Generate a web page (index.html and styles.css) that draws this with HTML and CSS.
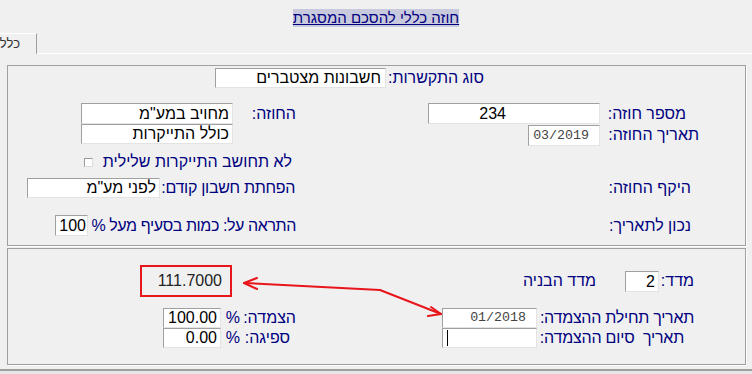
FILE: index.html
```html
<!DOCTYPE html>
<html lang="he" dir="rtl">
<head>
    <meta charset="UTF-8">
    <title>חוזה כללי להסכם המסגרת</title>
    <link rel="stylesheet" href="styles.css">
</head>
<body>
<div class="page">
    <div class="header"><span class="title">חוזה כללי להסכם המסגרת</span></div>

    <div class="tabs">
        <div class="tab-fill"></div>
        <div class="tab">כללי</div>
    </div>

    <div class="group group-top">
        <div class="row row1">
            <span class="label lbl-type">סוג התקשרות:</span>
            <span class="field fld-type">חשבונות מצטברים</span>
        </div>
        <div class="row row2">
            <span class="label lbl-num">מספר חוזה:</span>
            <span class="field fld-num">234</span>
            <span class="label lbl-party">החוזה:</span>
            <span class="field fld-party">מחויב במע"מ</span>
        </div>
        <div class="row row3">
            <span class="label lbl-date">תאריך החוזה:</span>
            <span class="field mono fld-date">03/2019</span>
            <span class="field fld-rise">כולל התייקרות</span>
        </div>
        <div class="row row4">
            <span class="label lbl-neg">לא תחושב התייקרות שלילית</span>
            <span class="check"></span>
        </div>
        <div class="row row5">
            <span class="label lbl-scope">היקף החוזה:</span>
            <span class="label lbl-prev">הפחתת חשבון קודם:</span>
            <span class="field fld-prev">לפני מע"מ</span>
        </div>
        <div class="row row6">
            <span class="label lbl-asof">נכון לתאריך:</span>
            <span class="label lbl-alert">התראה על: כמות בסעיף מעל %</span>
            <span class="field fld-alert">100</span>
        </div>
    </div>

    <div class="group group-bottom">
        <div class="row rowA">
            <span class="label lbl-idx">מדד:</span>
            <span class="field fld-idx">2</span>
            <span class="label lbl-idxname">מדד הבניה</span>
            <span class="result">111.7000</span>
        </div>
        <div class="row rowB">
            <span class="label lbl-start">תאריך תחילת ההצמדה:</span>
            <span class="field mono fld-start">01/2018</span>
            <span class="label lbl-link">הצמדה:</span>
            <span class="label pct">%</span>
            <span class="field fld-pct">100.00</span>
        </div>
        <div class="row rowC">
            <span class="label lbl-end">תאריך&nbsp; סיום ההצמדה:</span>
            <span class="field fld-end"><span class="caret"></span></span>
            <span class="label lbl-absorb">ספיגה:</span>
            <span class="label pct">%</span>
            <span class="field fld-pct">0.00</span>
        </div>
    </div>

    <div class="status"></div>

    <svg class="arrows" width="752" height="374" viewBox="0 0 752 374">
        <g fill="none" stroke="#e8151b" stroke-width="2" stroke-linecap="round" stroke-linejoin="round">
            <path d="M380 290 L244 283"/>
            <path d="M257 278 L244 283 L257 289"/>
            <path d="M380 290 L441 314"/>
            <path d="M431 307 L441 314 L428 316"/>
        </g>
    </svg>
</div>
</body>
</html>
```

FILE: styles.css
```css
body {
    margin: 0;
    background: #f0f0f0;
    font-family: "Liberation Sans", Arial, sans-serif;
    font-size: 16px;
}
.page {
    position: relative;
    width: 752px;
    height: 374px;
    overflow: hidden;
}
.header {
    padding-top: 9px;
    height: 18px;
    text-align: center;
}
.title {
    display: inline-block;
    line-height: 18px;
    font-size: 15px;
    color: #000080;
    background: #c9c9dd;
    text-decoration: underline;
}
.tabs {
    display: flex;
    align-items: flex-end;
    margin-top: 6px;
}
.tab-fill {
    flex: 1;
    height: 20px;
    border-bottom: 1px solid #fff;
}
.tab {
    width: 20px;
    height: 20px;
    padding-right: 16px;
    border-top: 1px solid #fff;
    border-right: 1px solid #a0a0a0;
    font-size: 13px;
    line-height: 20px;
    color: #333;
    white-space: nowrap;
    overflow: hidden;
}
.group {
    width: 739px;
    box-sizing: border-box;
    margin-right: 6px;
    border: 1px solid #a0a0a0;
    box-shadow: 1px 1px 0 #fff;
}
.group-top {
    margin-top: 11px;
    height: 181px;
}
.group-bottom {
    margin-top: 2px;
    height: 117px;
}
.row {
    display: flex;
    align-items: center;
}
.label {
    display: block;
    flex: none;
    color: #000080;
    white-space: nowrap;
}
.field {
    display: block;
    flex: none;
    box-sizing: border-box;
    height: 20px;
    padding: 0 3px;
    line-height: 18px;
    background: #fff;
    border: 1px solid;
    border-color: #a0a0a0 #e3e3e3 #e3e3e3 #a0a0a0;
    color: #000;
    white-space: nowrap;
    overflow: hidden;
}
.mono {
    font-family: "Liberation Mono", "Courier New", monospace;
    font-size: 13.3px;
    color: #444;
    padding-right: 10px;
}

/* top group */
.row1 { margin-top: 2px; height: 20px; }
.lbl-type { margin-right: 261px; width: 98px; }
.fld-type { width: 171px; padding-right: 4px; }

.row2 { margin-top: 15px; height: 21px; }
.row2 .field { height: 21px; line-height: 19px; }
.lbl-num { margin-right: 59px; width: 86px; }
.fld-num { width: 172px; padding-right: 93px; }
.lbl-party { margin-right: 132px; width: 63px; }
.fld-party { width: 152px; }

.row3 { height: 21px; align-items: flex-start; }
.lbl-date { margin-right: 46px; width: 99px; line-height: 21px; }
.fld-date { width: 72px; height: 21px; line-height: 19px; margin-top: 1px; }
.fld-rise { margin-right: 295px; width: 152px; }

.row4 { margin-top: 7px; height: 20px; }
.lbl-neg { margin-right: 453px; width: 199px; }
.check {
    width: 7px;
    height: 7px;
    background: #fff;
    border: 1px solid;
    border-color: #9a9a9a #dcdcdc #dcdcdc #9a9a9a;
}

.row5 { margin-top: 6px; height: 20px; }
.lbl-scope { margin-right: 54px; width: 396px; }
.lbl-prev { width: 135px; letter-spacing: -0.3px; }
.fld-prev { width: 133px; }

.row6 { margin-top: 17px; height: 21px; }
.lbl-asof { margin-right: 54px; width: 395px; }
.lbl-alert { width: 208px; letter-spacing: -0.4px; }
.fld-alert { width: 33px; height: 21px; line-height: 19px; padding-right: 1px; }

/* bottom group */
.rowA { margin-top: 16px; height: 32px; }
.lbl-idx { margin-right: 51px; width: 35px; }
.fld-idx { width: 34px; height: 21px; line-height: 19px; }
.lbl-idxname { margin-right: 29px; width: 364px; }
.result {
    display: block;
    box-sizing: border-box;
    width: 92px;
    height: 32px;
    padding-right: 8px;
    border: 2px solid #e8151b;
    line-height: 28px;
    color: #222;
}

.rowB { margin-top: 11px; height: 20px; }
.rowC { height: 20px; }
.lbl-start { margin-right: 51px; width: 157px; letter-spacing: -0.25px; }
.lbl-end { margin-right: 61px; width: 147px; letter-spacing: -0.2px; }
.fld-start, .fld-end { width: 95px; }
.lbl-link { margin-right: 146px; width: 56px; }
.lbl-absorb { margin-right: 152px; width: 50px; }
.pct { width: 19px; }
.fld-pct { width: 58px; }

.fld-end {
    display: flex;
    justify-content: flex-end;
    align-items: center;
    padding-left: 4px;
}
.caret {
    width: 1px;
    height: 16px;
    background: #000;
}

.status {
    margin-top: 4px;
    height: 3px;
    border-top: 2px solid #a0a0a0;
    background: #e6e6e6;
}

.arrows {
    position: absolute;
    top: 0;
    left: 0;
    pointer-events: none;
}
```
